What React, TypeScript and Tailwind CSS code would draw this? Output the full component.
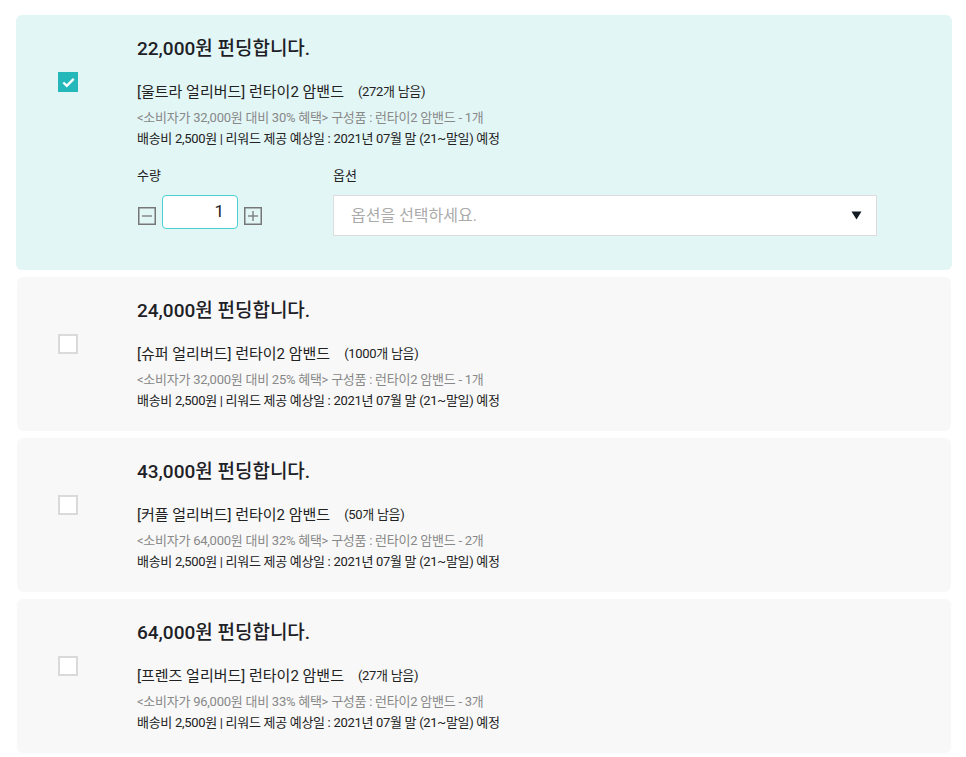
import { useState } from "react";

type Reward = {
  price: string;
  name: string;
  stock: string;
  detail: string;
};

const rewards: Reward[] = [
  {
    price: "22,000원 펀딩합니다.",
    name: "[울트라 얼리버드] 런타이2 암밴드",
    stock: "(272개 남음)",
    detail: "<소비자가 32,000원 대비 30% 혜택> 구성품 : 런타이2 암밴드 - 1개",
  },
  {
    price: "24,000원 펀딩합니다.",
    name: "[슈퍼 얼리버드] 런타이2 암밴드",
    stock: "(1000개 남음)",
    detail: "<소비자가 32,000원 대비 25% 혜택> 구성품 : 런타이2 암밴드 - 1개",
  },
  {
    price: "43,000원 펀딩합니다.",
    name: "[커플 얼리버드] 런타이2 암밴드",
    stock: "(50개 남음)",
    detail: "<소비자가 64,000원 대비 32% 혜택> 구성품 : 런타이2 암밴드 - 2개",
  },
  {
    price: "64,000원 펀딩합니다.",
    name: "[프렌즈 얼리버드] 런타이2 암밴드",
    stock: "(27개 남음)",
    detail: "<소비자가 96,000원 대비 33% 혜택> 구성품 : 런타이2 암밴드 - 3개",
  },
];

const font = "font-['Roboto','Noto_Sans_CJK_KR',sans-serif]";

function Checkbox({ checked }: { checked: boolean }) {
  if (checked) {
    return (
      <div className="w-5 h-5 bg-[#25b8ba] flex items-center justify-center">
        <svg width="13" height="11" viewBox="0 0 13 11" fill="none">
          <path d="M1.3 5.5 4.8 8.8 11.7 1.8" stroke="white" strokeWidth="2.4" />
        </svg>
      </div>
    );
  }
  return <div className="w-5 h-5 bg-white border-2 border-[#dadada]" />;
}

function StepButton({ plus }: { plus?: boolean }) {
  return (
    <button className="w-[18px] h-[18px] flex items-center justify-center">
      <svg width="18" height="18" viewBox="0 0 18 18" fill="none">
        <rect x="0.75" y="0.75" width="16.5" height="16.5" stroke="#777777" strokeWidth="1.5" />
        <path d="M4 9h10" stroke="#777777" strokeWidth="1.3" />
        {plus && <path d="M9 4v10" stroke="#777777" strokeWidth="1.3" />}
      </svg>
    </button>
  );
}

function RewardCard({ reward, selected }: { reward: Reward; selected: boolean }) {
  const [qty] = useState(1);
  return (
    <div
      className={
        selected
          ? "ml-4 mr-[14px] rounded-md bg-[#e2f6f6] flex pt-[22px] pb-[34px]"
          : "ml-[17px] mr-[15px] rounded-md bg-[#f8f8f8] flex pt-[22px] pb-[20px]"
      }
    >
      <div className={selected ? "w-[121px] pl-[42px] pt-[35px]" : "w-[120px] pl-[41px] pt-[35px]"}>
        <Checkbox checked={selected} />
      </div>
      <div className="flex-1">
        <div className="text-[19px] leading-6 font-medium text-[#1d2126]">{reward.price}</div>
        <div className="mt-[19px] flex items-center h-6">
          <span className="text-[15px] text-[#222222]">{reward.name}</span>
          <span className="ml-[14px] text-[13px] tracking-[-0.3px] text-[#222222]">{reward.stock}</span>
        </div>
        <div className="mt-[3px] text-[13px] tracking-[-0.25px] leading-[21px] text-[#888888]">
          {reward.detail}
        </div>
        <div className="text-[13px] tracking-[-0.3px] leading-[21px] text-[#222222]">
          배송비 2,500원 | 리워드 제공 예상일 : 2021년 07월 말 (21~말일) 예정
        </div>
        {selected && (
          <div className="mt-[18px] flex">
            <div className="w-[196px]">
              <div className="text-[13px] leading-[18px] text-[#222222]">수량</div>
              <div className="mt-[10px] flex items-center gap-[6px] h-[41px] pl-px">
                <StepButton />
                <div className="self-start w-[76px] h-[34px] rounded border border-[#4ccfcf] bg-white flex items-center justify-end pr-[13px] text-[17px] text-[#222222]">
                  {qty}
                </div>
                <StepButton plus />
              </div>
            </div>
            <div>
              <div className="text-[13px] leading-[18px] text-[#222222]">옵션</div>
              <div className="mt-[10px] w-[544px] h-[41px] bg-white border border-[#dcdcdc] flex items-center justify-between pl-[17px] pr-[14px]">
                <span className="text-[16px] text-[#aaaaaa]">옵션을 선택하세요.</span>
                <svg width="11" height="9" viewBox="0 0 11 9">
                  <path d="M0.5 0.5h10L5.5 8.5z" fill="#111a22" />
                </svg>
              </div>
            </div>
          </div>
        )}
      </div>
    </div>
  );
}

export default function App() {
  return (
    <div className={`${font} bg-white min-h-[757px] w-[966px] pt-[15px] flex flex-col gap-[7px]`}>
      {rewards.map((r, i) => (
        <RewardCard key={r.price} reward={r} selected={i === 0} />
      ))}
    </div>
  );
}
